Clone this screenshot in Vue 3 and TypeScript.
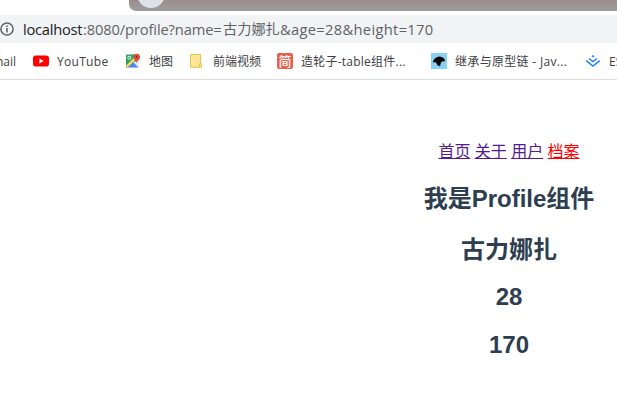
<script setup lang="ts">
interface RouteLink {
  label: string
  active: boolean
}

const links: RouteLink[] = [
  { label: '首页', active: false },
  { label: '关于', active: false },
  { label: '用户', active: false },
  { label: '档案', active: true },
]

const query = { name: '古力娜扎', age: 28, height: 170 }
</script>

<template>
  <div class="window">
    <div class="tabs"><div class="strip"><span class="knob"></span></div></div>
    <div class="address">
      <svg class="info" viewBox="0 0 14 14">
        <circle cx="7" cy="7" r="6.1" fill="none" stroke="#5f6368" stroke-width="1.5" />
        <path d="M7 6v4.5M7 3.4v1.6" stroke="#5f6368" stroke-width="1.6" />
      </svg>
      <span class="host">localhost</span><span class="path">:8080/profile?name=</span><span class="zh">{{ query.name }}</span><span class="rest">&amp;age={{ query.age }}&amp;height={{ query.height }}</span>
    </div>
    <div class="bookmarks">
      <span class="mark mail"><span class="label">Gmail</span></span>
      <span class="mark youtube">
        <svg class="icon" viewBox="0 0 16 16">
          <rect x="0" y="2.5" width="16" height="11" rx="2.8" fill="#f00" />
          <path d="M6.3 5.5v5L10.7 8z" fill="#fff" />
        </svg>
        <span class="label">YouTube</span>
      </span>
      <span class="mark map">
        <svg class="icon" viewBox="0 0 16 16">
          <rect x="1" y="1.5" width="13" height="13" rx="1" fill="#e8eaed" />
          <path d="M1 2.5q0-1 1-1h8l1 6.5-8.5 6.5H2q-1 0-1-1z" fill="#2da263" />
          <path d="M1.5 14.5L8 8l6 6.5z" fill="#4787f3" />
          <path d="M1 12.8L9.5 4.3l1.5 2L2.5 14.5z" fill="#ffdc4c" />
          <path d="M8.2 8.5l5.8 6" stroke="#fff" stroke-width="1" />
          <circle cx="4.3" cy="4.7" r="1.5" fill="none" stroke="#fff" />
          <path d="M11.7 10.5c0-2.8-3.3-3.3-3.3-6.4a3.3 3.3 0 016.6 0c0 3.1-3.3 3.6-3.3 6.4z" fill="#e34c40" />
          <circle cx="11.7" cy="3.8" r="1.1" fill="#8b2b24" />
        </svg>
        <span class="label">地图</span>
      </span>
      <span class="mark folder">
        <svg class="icon" viewBox="0 0 16 16">
          <path d="M1.5 1.5h10v9h1v3.8h-11z" fill="#ffe694" stroke="#e8c454" />
          <path d="M10.5 14v-3.5h1" fill="none" stroke="#e8c454" />
        </svg>
        <span class="label">前端视频</span>
      </span>
      <span class="mark jian">
        <span class="icon stamp">简</span>
        <span class="label">造轮子-table组件...</span>
      </span>
      <span class="mark chain">
        <svg class="icon" viewBox="0 0 16 16">
          <rect width="16" height="16" fill="#87d2f4" />
          <path d="M2 8.6l1-2 1.2-1.3 2-1.4 2.5-.3 2.4.6 2 1.3 1 2-.8 1-1.7-.3-1.2.7-.4 1.3-.7.8.2 1.4-1.4.9-1.8-1.2-.9-2.2-1.4-.8-1.4.6z" fill="#000" />
        </svg>
        <span class="label">继承与原型链 - Jav...</span>
      </span>
      <span class="mark juejin">
        <svg class="icon" viewBox="0 0 16 16">
          <path d="M8 2l1.6 1.3L8 4.5 6.4 3.3z" fill="#1e80ff" />
          <path d="M4 5.5l4 3.1 4-3.1M1.2 7.7L8 13l6.8-5.3" fill="none" stroke="#1e80ff" stroke-width="1.5" />
        </svg>
        <span class="label">ES6</span>
      </span>
    </div>
    <main class="page">
      <nav class="nav">
        <a v-for="link in links" :key="link.label" href="#" class="link" :class="{ active: link.active }">{{ link.label }}</a>
      </nav>
      <h2 class="title">我是Profile组件</h2>
      <h2 class="title">{{ query.name }}</h2>
      <h2 class="title number age">{{ query.age }}</h2>
      <h2 class="title number">{{ query.height }}</h2>
    </main>
  </div>
</template>

<style>
body { margin: 0; background: #fff; overflow: hidden; }
</style>

<style scoped>
.window { width: 617px; height: 406px; overflow: hidden; background: #fff; }
.tabs { height: 15px; padding-left: 129px; }
.strip { height: 11px; overflow: hidden; border-radius: 0 0 0 7px; background: linear-gradient(#9b8b8d, #9d9d9d 90%); }
.knob { display: block; width: 28px; height: 28px; margin: -20px 0 0 8px; border-radius: 50%; background: #dee1e6; }
.address {
  display: flex; align-items: center; height: 28px; background: #f1f3f4; color: #5f6368;
  font: 14.7px/28px "Open Sans", "Noto Sans CJK SC", sans-serif; white-space: nowrap;
}
.info { width: 14px; height: 14px; margin-right: 9px; flex: none; }
.address span { flex: none; }
.host { width: 60px; color: #202124; letter-spacing: -0.25px; }
.path { width: 140px; letter-spacing: -0.13px; }
.zh { width: 57px; font-size: 14.2px; }
.rest { letter-spacing: 0.32px; }
.bookmarks {
  display: flex; height: 36px; border-bottom: 1px solid #dadce0; color: #3c4043;
  font: 12px/36px "Open Sans", "Noto Sans CJK SC", sans-serif; white-space: nowrap;
}
.mark { display: flex; align-items: center; gap: 8px; flex: none; }
.label { position: relative; top: 1px; }
.icon { width: 16px; height: 16px; flex: none; }
.mail { width: 33px; box-sizing: border-box; justify-content: flex-end; padding-right: 17px; }
.youtube { width: 92px; letter-spacing: 0.3px; }
.map { width: 64px; }
.folder { width: 88px; }
.jian { width: 154px; letter-spacing: 0.24px; }
.chain { width: 154px; letter-spacing: 0.32px; }
.stamp {
  border-radius: 2px; background: #e8604c; color: #fff; text-align: center; letter-spacing: 0;
  font: 500 13px/16px "Noto Sans CJK SC", sans-serif;
}
.page {
  width: 400px; margin-left: 309px; padding-top: 61px; text-align: center; color: #2c3e50;
  font-family: "Liberation Sans", "Noto Sans CJK SC", sans-serif;
}
.nav { display: flex; justify-content: center; gap: 4.4px; height: 22px; line-height: 22px; font-size: 16px; }
.link { color: #551a8b; text-decoration: underline; }
.link.active { color: #f00; }
.title { margin: 20px 0 0; font-size: 24px; line-height: 31px; font-weight: 700; }
.number { line-height: 28px; }
.age { margin-top: 18px; }
</style>
